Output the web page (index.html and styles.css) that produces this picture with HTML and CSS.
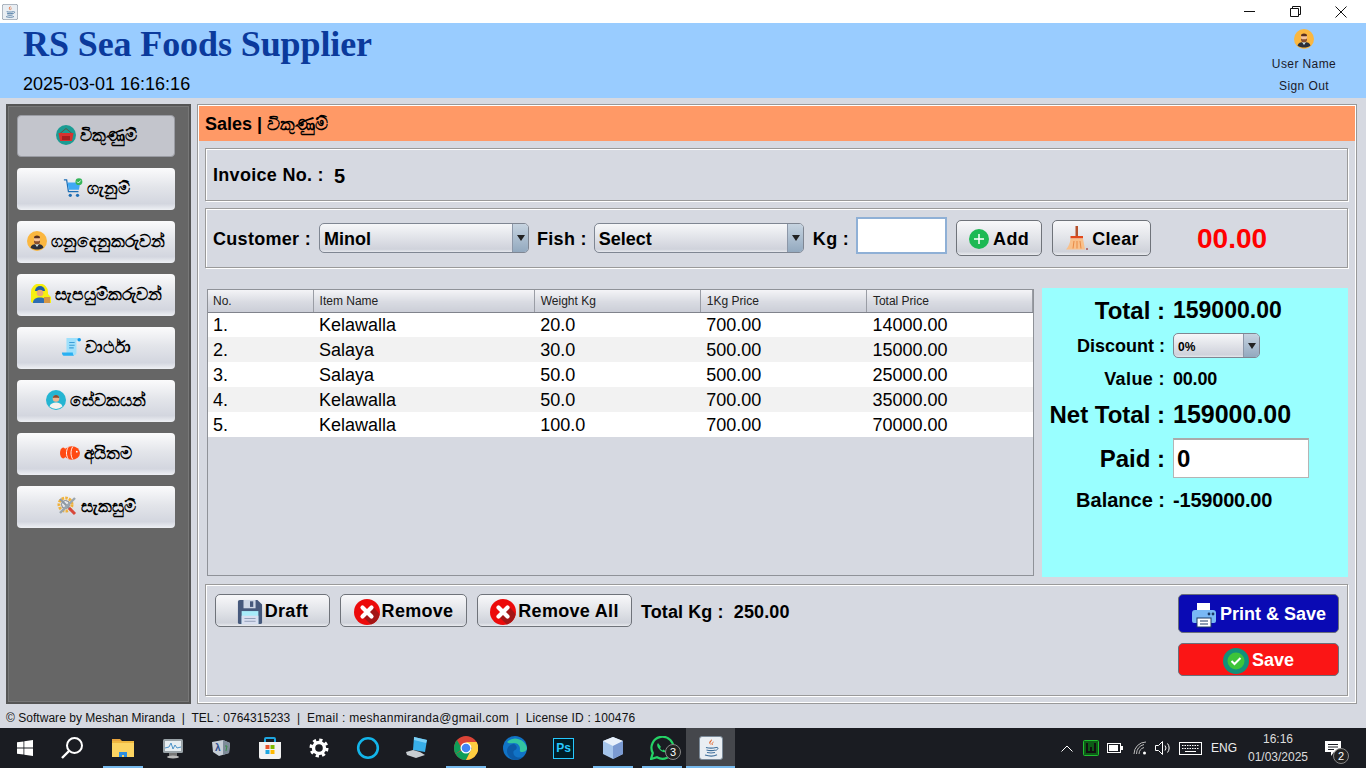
FILE: index.html
```html
<!DOCTYPE html>
<html lang="si">
<head>
  <meta charset="UTF-8" />
  <title>RS Sea Foods Supplier</title>
  <link rel="stylesheet" href="styles.css">
</head>
<body>

  <!-- shared icons -->
  <svg class="defs" width="0" height="0">
    <symbol id="i-user" viewBox="0 0 20 20">
      <circle cx="10" cy="10" r="10" fill="#fbb73f"/>
      <path d="M3.500 16.500c.5-2.500 3-3.500 6.500-3.500s6 1 6.500 3.500c-1.500 1.500-4 2-6.500 2s-5-.5-6.500-2z" fill="#2b2f3a"/>
      <path d="M8 13h4l-2 3z" fill="#cfe7ee"/>
      <rect x="7" y="5" width="6" height="8" rx="2.500" fill="#f3c29b"/>
      <path d="M7 6.800c-.3-3 6.300-3 6 0l-.4.500H7.400z" fill="#5a3020"/>
      <path d="M7 9.500l1.300.8h3.400l1.300-.8v1a3 3 0 0 1-6 0z" fill="#8a4f2c"/>
    </symbol>
    <symbol id="i-java" viewBox="0 0 24 24">
      <rect x=".5" y=".5" width="23" height="23" rx="2.500" fill="#e9eef3" stroke="#7b8a99"/>
      <path d="M12.500 3c1.500 2-2 3-1 5 .3.700 1 1.300 1 1.300-1.700-.8-2.600-2-2.200-3.200C10.800 4.800 12.500 4.500 12.500 3z" fill="#e2642a"/>
      <path d="M14.500 6c-1.500 1-2 1.600-1 3" fill="none" stroke="#e2642a"/>
      <path d="M7 11.500c3 .8 7 .8 10 0M7.500 14c2.500.7 6.500.7 9 0M8 16.500c2.500.6 5.500.6 8 0M6 19c4 1.300 9 1.300 12-.2" fill="none" stroke="#3f6f9b" stroke-width="1.200"/>
      <path d="M17 11.500c2.500-.8 3 1.800-.5 3" fill="none" stroke="#3f6f9b"/>
    </symbol>
    <symbol id="i-remove" viewBox="0 0 26 26">
      <circle cx="13" cy="13" r="13" fill="#ec0b0b"/>
      <path d="M9 18l8 7.500a13 13 0 0 0 8.500-10.500l-6-7z" fill="#a31616"/>
      <path d="M8.500 8.500l9 9M17.500 8.500l-9 9" stroke="#fff" stroke-width="4.200" stroke-linecap="round"/>
    </symbol>
  </svg>

  <div class="titlebar">
    <svg class="app-icon"><use href="#i-java"/></svg>
    <div class="win-btns">
      <span class="win-btn"><svg width="11" height="11" viewBox="0 0 11 11"><path d="M0 5.500h11" stroke="#111"/></svg></span>
      <span class="win-btn"><svg width="11" height="11" viewBox="0 0 11 11"><path d="M.5 2.500h8v8h-8zM2.500 2.500V.5h8v8H8.500" fill="none" stroke="#111"/></svg></span>
      <span class="win-btn"><svg width="12" height="12" viewBox="0 0 12 12"><path d="M.5.500l11 11M11.500.5l-11 11" stroke="#111"/></svg></span>
    </div>
  </div>

  <header class="app-header">
    <div class="brand">
      <h1>RS Sea Foods Supplier</h1>
      <div class="clock">2025-03-01 16:16:16</div>
    </div>
    <div class="user-box">
      <svg class="user-icon"><use href="#i-user"/></svg>
      <span>User Name</span>
      <span>Sign Out</span>
    </div>
  </header>

  <main class="main">
    <nav class="sidebar">
      <button class="nav-btn active">
        <svg class="nav-icon" viewBox="0 0 20 20"><circle cx="10" cy="10" r="10" fill="#1b9c93"/><path d="M4 8.500L10 3.500l6 5" fill="none" stroke="#6b4a3a" stroke-width=".9"/><path d="M2.500 8h15l-1.500 8H4z" fill="#d8322f"/><rect x="6" y="11" width="8" height="4" fill="#a81f1f"/></svg>
        විකුණුම්
      </button>
      <button class="nav-btn">
        <svg class="nav-icon" viewBox="0 0 22 22"><path d="M1 2h3l2 13h11" fill="none" stroke="#1f6fb5" stroke-width="1.400"/><path d="M5 5h14l-1.500 8H6.500z" fill="#3fa9f5"/><circle cx="8" cy="19" r="1.800" fill="#1f6fb5"/><circle cx="16" cy="19" r="1.800" fill="#1f6fb5"/><circle cx="17.500" cy="4" r="3.800" fill="#35b55a"/><path d="M15.500 4l1.500 1.500 2.500-2.800" fill="none" stroke="#fff"/></svg>
        ගැනුම්
      </button>
      <button class="nav-btn">
        <svg class="nav-icon"><use href="#i-user"/></svg>
        ගනුදෙනුකරුවන්
      </button>
      <button class="nav-btn">
        <svg class="nav-icon" viewBox="0 0 20 20"><path d="M0 8a8.500 8.500 0 0 1 17 0v2l3 3v6H2l-2-1z" fill="#f7ef10"/><path d="M4 7a5 5 0 0 1 10 0z" fill="#1d5fa8"/><circle cx="9" cy="9" r="3.300" fill="#e9a877"/><path d="M2 19c0-4 3-5.500 7-5.500s6 1.500 6 5.500z" fill="#2c6db3"/><rect x="13" y="13" width="6" height="6" fill="#d59644"/></svg>
        සැපයුම්කරුවන්
      </button>
      <button class="nav-btn">
        <svg class="nav-icon" viewBox="0 0 22 22"><path d="M6 1h13l-2 3v13a3 3 0 0 1-3 3H2c2 0 4-1 4-3z" fill="#9fe0fb"/><path d="M1 17h12c0 1.500.5 3 1.500 3.500H3c-1 0-2-1.500-2-3.500z" fill="#2ab0f2"/><path d="M9 6h6M9 9h6M9 12h5" stroke="#3d9ed8" stroke-width="1.200"/><circle cx="20" cy="3" r="2" fill="#0f9bec"/></svg>
        වාර්ථා
      </button>
      <button class="nav-btn">
        <svg class="nav-icon" viewBox="0 0 20 20"><circle cx="10" cy="10" r="10" fill="#25b5d2"/><path d="M3.500 16.500c1-3 3.500-4 6.500-4s5.500 1 6.500 4a10 10 0 0 1-13 0z" fill="#f4f1ee"/><circle cx="10" cy="8.500" r="3.300" fill="#efb48f"/><path d="M6.800 8c0-4 6.400-4 6.400 0-2 0-4-.5-6.400 0z" fill="#8a4a2f"/></svg>
        සේවකයන්
      </button>
      <button class="nav-btn">
        <svg class="nav-icon" viewBox="0 0 22 16"><ellipse cx="3.500" cy="8" rx="3.500" ry="6" fill="#ff4a12"/><ellipse cx="13" cy="8" rx="9" ry="7.500" fill="#ff4a12"/><path d="M9 1.500c-2.500 4-2.500 9 0 13M14 1c-2.500 4-2.500 10 0 14" fill="none" stroke="#fff" stroke-width="1"/><circle cx="18.500" cy="6.500" r="1" fill="#fff"/></svg>
        අයිතම
      </button>
      <button class="nav-btn">
        <svg class="nav-icon" viewBox="0 0 20 20"><circle cx="8.500" cy="8.500" r="6.500" fill="none" stroke="#f0b23c" stroke-width="3" stroke-dasharray="2.500 1.200"/><circle cx="8.500" cy="8.500" r="4" fill="none" stroke="#7b7f86"/><path d="M3 3l14 14" stroke="#8d98a3" stroke-width="2"/><path d="M12 12l6 6" stroke="#d8473a" stroke-width="3"/><path d="M18 2L3 17" stroke="#9aa5ad" stroke-width="2.400"/></svg>
        සැකසුම්
      </button>
    </nav>

    <section class="content">
      <div class="page-title">Sales | විකුණුම්</div>
      <div class="page-body">
        <div class="panel invoice-panel">
          <span class="lbl">Invoice No. :</span>
          <span class="invoice-no">5</span>
        </div>

        <div class="panel form-panel">
          <span class="lbl">Customer :</span>
          <div class="combo combo-wide"><span>Minol</span><i class="combo-arrow"></i></div>
          <span class="lbl fish-lbl">Fish :</span>
          <div class="combo combo-wide fish-combo"><span>Select</span><i class="combo-arrow"></i></div>
          <span class="lbl kg-lbl">Kg :</span>
          <input class="kg-input" type="text" />
          <button class="btn add-btn">
            <svg class="btn-icon-sm" viewBox="0 0 20 20"><circle cx="10" cy="10" r="10" fill="#1db954"/><path d="M10 5v10M5 10h10" stroke="#fff" stroke-width="1.500"/></svg>
            Add
          </button>
          <button class="btn clear-btn">
            <svg class="btn-icon" viewBox="0 0 24 26"><rect x="10.500" y="0" width="2.500" height="11" fill="#b5512c"/><rect x="5.500" y="10" width="12.500" height="2.500" fill="#e2481c"/><path d="M5.500 12.500H18l2 11H1c2.500-3 4-6 4.500-11z" fill="#f9c08a"/><path d="M9 15l-1 7.500M12 15v7.500M15 15l1 7.500" stroke="#e98a45"/><circle cx="22" cy="23" r="1" fill="#a55"/></svg>
            Clear
          </button>
          <span class="amount-red">00.00</span>
        </div>

        <div class="middle">
          <div class="table-wrap">
            <table class="items">
              <thead>
                <tr><th class="c-no">No.</th><th class="c-name">Item Name</th><th class="c-col">Weight Kg</th><th class="c-col">1Kg Price</th><th class="c-col">Total Price</th></tr>
              </thead>
              <tbody>
                <tr><td>1.</td><td>Kelawalla</td><td>20.0</td><td>700.00</td><td>14000.00</td></tr>
                <tr><td>2.</td><td>Salaya</td><td>30.0</td><td>500.00</td><td>15000.00</td></tr>
                <tr><td>3.</td><td>Salaya</td><td>50.0</td><td>500.00</td><td>25000.00</td></tr>
                <tr><td>4.</td><td>Kelawalla</td><td>50.0</td><td>700.00</td><td>35000.00</td></tr>
                <tr><td>5.</td><td>Kelawalla</td><td>100.0</td><td>700.00</td><td>70000.00</td></tr>
              </tbody>
            </table>
          </div>

          <div class="totals">
            <span class="t-lbl f24">Total :</span><span class="t-val f23">159000.00</span>
            <span class="t-lbl f18">Discount :</span><div class="combo combo-small"><span>0%</span><i class="combo-arrow"></i></div>
            <span class="t-lbl f18 wide">Value :</span><span class="t-val f18 tight">00.00</span>
            <span class="t-lbl f24">Net Total :</span><span class="t-val f25">159000.00</span>
            <span class="t-lbl f24">Paid :</span><input class="paid-input" type="text" value="0" />
            <span class="t-lbl f19">Balance :</span><span class="t-val f19 tight">-159000.00</span>
          </div>
        </div>

        <div class="panel bottom-panel">
          <div class="bottom-left">
            <button class="btn draft-btn">
              <svg class="btn-icon" viewBox="0 0 26 28"><path d="M0 3a2 2 0 0 1 2-2h19l5 5v19a2 2 0 0 1-2 2H2a2 2 0 0 1-2-2z" fill="#46597c"/><rect x="6" y="1" width="13" height="9" fill="#cfd8e6"/><rect x="13" y="2.500" width="3.500" height="6" fill="#46597c"/><rect x="4" y="13" width="18" height="14" fill="#a8ecfa"/><rect x="4" y="18" width="18" height="9" fill="#d9dff0"/><path d="M7 21h12M7 24h12" stroke="#8d9ab5"/></svg>
              Draft
            </button>
            <button class="btn remove-btn"><svg class="btn-icon"><use href="#i-remove"/></svg>Remove</button>
            <button class="btn remove-all-btn"><svg class="btn-icon"><use href="#i-remove"/></svg>Remove All</button>
            <span class="lbl total-kg">Total Kg :&nbsp; 250.00</span>
          </div>
          <div class="bottom-right">
            <button class="btn-solid print-btn">
              <svg class="btn-icon" viewBox="0 0 24 26"><rect x="5" y="1" width="13" height="8" fill="#fff"/><path d="M3 8h18a3 3 0 0 1 3 3v8a2 2 0 0 1-2 2H2a2 2 0 0 1-2-2v-8a3 3 0 0 1 3-3z" fill="#79b8f5"/><circle cx="17" cy="12" r="1.400" fill="#1c3a66"/><circle cx="21" cy="12" r="1.400" fill="#1c3a66"/><rect x="5" y="16" width="14" height="9" fill="#fff" stroke="#1c3a66"/><path d="M8 19h8M8 22h8" stroke="#1c3a66"/></svg>
              Print &amp; Save
            </button>
            <button class="btn-solid save-btn">
              <svg class="btn-icon" viewBox="0 0 26 26"><circle cx="13" cy="13" r="13" fill="#12917a"/><circle cx="13" cy="13" r="8.500" fill="#3dc43a"/><path d="M8.500 13l3 3 6-6" fill="none" stroke="#fff" stroke-width="2"/></svg>
              Save
            </button>
          </div>
        </div>
      </div>
    </section>
  </main>

  <footer class="app-footer">© Software by Meshan Miranda  |  TEL : 0764315233  |  <span class="foot-email">Email : meshanmiranda@gmail.com</span>  |  <span class="foot-lic">License ID : 100476</span></footer>

  <div class="taskbar">
    <div class="task-items">
      <span class="task">
        <svg width="16" height="16" viewBox="0 0 16 16"><path d="M0 2.300l6.500-.9v6.200H0zM7.300 1.300L16 0v7.600H7.300zM0 8.400h6.500v6.200L0 13.700zM7.300 8.400H16V16l-8.700-1.200z" fill="#fff"/></svg>
      </span>
      <span class="task search-task">
        <svg width="24" height="24" viewBox="0 0 24 24"><circle cx="14.500" cy="9.500" r="7.500" fill="none" stroke="#fff" stroke-width="2"/><path d="M9 15l-7 7" stroke="#fff" stroke-width="2.400"/></svg>
      </span>
      <span class="task open">
        <svg width="22" height="20" viewBox="0 0 22 20"><path d="M0 1h8l2 2h-10z" fill="#e8a33d"/><rect y="3" width="22" height="16" fill="#fcd462"/><rect y="3" width="22" height="2" fill="#f0b840"/><path d="M7 19v-5h8v5h-3v-2h-2v2z" fill="#2f8fe0"/></svg>
      </span>
      <span class="task">
        <svg width="24" height="24" viewBox="0 0 24 24"><rect x="3" y="3" width="20" height="14" rx="1.500" fill="#9aa3a8"/><rect x="5" y="5" width="16" height="10" fill="#e8eef2"/><path d="M5 12l4-1 2-4 2 6 2-4 2 3 4-1" fill="none" stroke="#4d93c9"/><rect x="9" y="17" width="8" height="3" fill="#777"/><ellipse cx="13" cy="21" rx="6" ry="1.500" fill="#bbb"/></svg>
      </span>
      <span class="task">
        <svg width="22" height="20" viewBox="0 0 22 20"><path d="M2 4l11-2 7 3-1 10-10 3-6-4z" fill="#c5cdd6"/><path d="M13 2l7 3-1 10-6 2z" fill="#7d8b99"/><text x="5" y="13" class="tray-glyph">λ</text><path d="M15 8l2 0-1 5" fill="none" stroke="#3a8f4a"/></svg>
      </span>
      <span class="task">
        <svg width="24" height="24" viewBox="0 0 24 24"><path d="M7 7V3a1 1 0 0 1 1-1h8a1 1 0 0 1 1 1v4" fill="none" stroke="#1fa6e0" stroke-width="2"/><path d="M1 6h22v15a2 2 0 0 1-2 2H3a2 2 0 0 1-2-2z" fill="#f2f2f2"/><rect x="7.500" y="9" width="4" height="4" fill="#e8522b"/><rect x="12.500" y="9" width="4" height="4" fill="#7fba00"/><rect x="7.500" y="14" width="4" height="4" fill="#1fa6e0"/><rect x="12.500" y="14" width="4" height="4" fill="#ffb900"/></svg>
      </span>
      <span class="task">
        <svg width="20" height="20" viewBox="0 0 20 20"><circle cx="10" cy="10" r="5.500" fill="none" stroke="#fff" stroke-width="3.400"/><circle cx="10" cy="10" r="8" fill="none" stroke="#fff" stroke-width="3" stroke-dasharray="3.200 3.080"/></svg>
      </span>
      <span class="task">
        <svg width="24" height="24" viewBox="0 0 24 24"><circle cx="12" cy="12" r="9.800" fill="none" stroke="#13b5ea" stroke-width="2.600"/></svg>
      </span>
      <span class="task">
        <svg width="24" height="24" viewBox="0 0 24 24"><path d="M9 1l13 3-2 12-12-2z" fill="#38aee8"/><path d="M9 1l13 3-1 3-12-3z" fill="#7dd0f5"/><path d="M1 16l7-2 7 2 5 3-9 3-9-3z" fill="#c9ced2"/></svg>
      </span>
      <span class="task open">
        <svg width="24" height="24" viewBox="0 0 24 24"><circle cx="12" cy="12" r="12" fill="#db4437"/><path d="M12 12L1.600 18A12 12 0 0 0 12 24l6-12z" fill="#0f9d58"/><path d="M12 6h10.600A12 12 0 0 1 12 24l6-12z" fill="#ffcd40"/><path d="M1.600 18A12 12 0 0 1 3 4l5 9z" fill="#0f9d58"/><circle cx="12" cy="12" r="5.500" fill="#fff"/><circle cx="12" cy="12" r="4.300" fill="#4285f4"/></svg>
      </span>
      <span class="task">
        <svg width="24" height="24" viewBox="0 0 24 24"><circle cx="12" cy="12" r="12" fill="#1173c6"/><path d="M4 6a12 12 0 0 1 20 6c0 3-3 4-5 4-3 0-2-2-2-3 0-3-2-6-6-6-3 0-5 1-7-1z" fill="#33c6a1"/><path d="M11 8c-4 0-7 3-7 7 0 4 3 8 8 9 3 0 6-1 8-3-3 1-7 1-9-2-1-2-1-4 1-5 2-1 3-4-1-6z" fill="#0c5aa6"/></svg>
      </span>
      <span class="task">
        <span class="ps-icon">Ps</span>
      </span>
      <span class="task open">
        <svg width="24" height="24" viewBox="0 0 24 24"><path d="M12 1l10 4v13l-10 5-10-5V5z" fill="#a5c4ea"/><path d="M12 1l10 4-10 5L2 5z" fill="#e8f0fa"/><path d="M12 10l10-5v13l-10 5z" fill="#7b9ad1"/></svg>
      </span>
      <span class="task open">
        <svg width="24" height="24" viewBox="0 0 24 24"><path d="M1 23l1.800-6A11 11 0 1 1 7 21.300z" fill="none" stroke="#25d366" stroke-width="2.200"/><path d="M8 7c-1.500 1.500-1 4 1.500 6.500S14.500 17 16 15.500l-2.500-2-1 1c-1-.5-2-1.500-2.500-2.500l1-1z" fill="#25d366"/></svg>
        <span class="task-badge">3</span>
      </span>
      <span class="task open current">
        <svg width="24" height="24"><use href="#i-java"/></svg>
      </span>
    </div>

    <div class="tray">
      <svg class="tray-caret" width="12" height="7" viewBox="0 0 12 7"><path d="M.5 6.500L6 1l5.500 5.500" fill="none" stroke="#fff"/></svg>
      <svg class="tray-ico" width="16" height="16" viewBox="0 0 16 16"><rect x=".5" y=".5" width="15" height="15" rx="1" fill="#0d5c17" stroke="#1fbf2e"/><path d="M4 3v9h8V3M8 7v5" fill="none" stroke="#111" stroke-width="2"/></svg>
      <svg class="tray-ico tray-batt" width="16" height="10" viewBox="0 0 16 10"><rect x=".5" y=".5" width="13" height="9" fill="none" stroke="#fff"/><rect x="2" y="2" width="9" height="6" fill="#fff"/><rect x="14" y="3" width="2" height="4" fill="#fff"/></svg>
      <svg class="tray-ico" width="14" height="14" viewBox="0 0 14 14"><path d="M1 13A12 12 0 0 1 13 1M3.500 13A9.500 9.500 0 0 1 11 3.500M6 13a7 7 0 0 1 5-6.500" fill="none" stroke="#bbb"/><circle cx="11.500" cy="12" r="1.500" fill="#fff"/></svg>
      <svg class="tray-ico" width="16" height="14" viewBox="0 0 16 14"><path d="M.5 4.500h3L7.500.5v13l-4-4h-3z" fill="none" stroke="#fff"/><path d="M10 4.500a4 4 0 0 1 0 5M12.500 2.500a7 7 0 0 1 0 9" fill="none" stroke="#fff"/></svg>
      <svg class="tray-ico" width="23" height="13" viewBox="0 0 23 13"><rect x=".5" y=".5" width="22" height="12" fill="none" stroke="#fff"/><path d="M3 3.500h17M3 6.500h17" stroke="#fff" stroke-dasharray="1.500 1"/><path d="M6 9.500h11" stroke="#fff"/></svg>
      <span class="tray-lang">ENG</span>
      <span class="tray-clock"><span>16:16</span><span>01/03/2025</span></span>
      <span class="tray-note">
        <svg width="16" height="15" viewBox="0 0 16 15"><path d="M0 0h16v11H9l-3 4v-4H0z" fill="#fff"/><path d="M3 3.500h10M3 6h10M3 8.500h6" stroke="#1a1c22"/></svg>
        <span class="task-badge">2</span>
      </span>
    </div>
  </div>

</body>
</html>
```

FILE: styles.css
```css
* { box-sizing: border-box; }

body {
  margin: 0;
  width: 1366px;
  height: 768px;
  overflow: hidden;
  display: flex;
  flex-direction: column;
  background: #d6d9e1;
  color: #000;
  font-family: "Liberation Sans", Arial, sans-serif;
}

.defs { position: absolute; }

/* window chrome */
.titlebar {
  height: 23px;
  background: #fff;
  display: flex;
  align-items: center;
  justify-content: space-between;
  flex: none;
}
.app-icon { width: 16px; height: 16px; margin-left: 2px; }
.win-btns { display: flex; padding-right: 2px; }
.win-btn {
  width: 46px;
  height: 23px;
  display: flex;
  align-items: center;
  justify-content: center;
}

.app-header {
  height: 75px;
  flex: none;
  background: #99ccff;
  display: flex;
  justify-content: space-between;
  padding-left: 23px;
}
.app-header h1 {
  margin: 0;
  padding-top: 1px;
  font: bold 36px/41px "Liberation Serif", "Times New Roman", serif;
  letter-spacing: -.1px;
  color: #0b3a9c;
}
.clock { font-size: 18px; line-height: 21px; margin-top: 9px; }
.user-box {
  width: 84px;
  margin-right: 20px;
  padding-top: 6px;
  display: flex;
  flex-direction: column;
  align-items: center;
  font-size: 12px;
  letter-spacing: .4px;
  color: #1a1a2a;
}
.user-icon { width: 20px; height: 20px; flex: none; margin-bottom: 8px; }
.user-box span { line-height: 14px; margin-bottom: 8px; flex: none; }

/* main layout */
.main {
  flex: none;
  height: 606px;
  display: flex;
  gap: 6px;
  padding: 6px 9px 0 6px;
}

.sidebar {
  width: 185px;
  flex: none;
  background: #666;
  border: 2px solid #555;
  box-shadow: inset 0 0 0 1px #777;
  padding: 9px 14px 0 9px;
  display: flex;
  flex-direction: column;
  gap: 11px;
}
.nav-btn {
  height: 42px;
  flex: none;
  display: flex;
  align-items: center;
  justify-content: center;
  gap: 4px;
  border: 0;
  border-radius: 4px;
  padding: 0 0 2px;
  font: bold 16.5px "Liberation Sans", "Noto Sans", sans-serif;
  color: #000;
  background: linear-gradient(#fbfbfc 0, #e3e5ea 45%, #d3d6df 85%, #eef0f4 100%);
}
.nav-btn.active {
  background: #c3c5cc;
  border: 1px solid #9a9ca3;
}
.nav-icon { width: 20px; height: 20px; flex: none; }

.content {
  flex: 1;
  min-width: 0;
  border: 1px solid #999;
  box-shadow: inset 1px 1px 0 #fff, inset -1px -1px 0 #fff;
  padding: 1px;
  display: flex;
  flex-direction: column;
}
.page-title {
  height: 35px;
  flex: none;
  background: #ff9966;
  padding: 1px 0 0 6px;
  font: bold 18px/35px "Liberation Sans", "Noto Sans", sans-serif;
}
.page-body {
  flex: 1;
  padding: 7px 7px 6px 6px;
  display: flex;
  flex-direction: column;
}

.panel {
  border: 1px solid #9a9a9a;
  box-shadow: inset 1px 1px 0 #fff, 1px 1px 0 #fff;
}
.lbl {
  padding-top: 2px;
  font-size: 18px;
  font-weight: bold;
  letter-spacing: .3px;
  white-space: nowrap;
}

.invoice-panel {
  height: 53px;
  flex: none;
  display: flex;
  align-items: center;
  padding-left: 7px;
}
.invoice-no { font-size: 20px; font-weight: bold; margin-left: 10px; margin-top: 3px; }

.form-panel {
  height: 60px;
  flex: none;
  margin-top: 7px;
  display: flex;
  align-items: center;
  padding-left: 7px;
}

/* nimbus look-alike controls */
.combo {
  display: flex;
  align-items: center;
  justify-content: space-between;
  border: 1px solid #7f8692;
  border-radius: 5px;
  overflow: hidden;
  font-weight: bold;
  background: linear-gradient(#f6f7f9 0, #dcdee5 60%, #cfd2db 90%, #e6e8ed 100%);
}
.combo span { padding: 2px 0 0 4px; }
.combo-wide { width: 210px; height: 30px; font-size: 18px; margin-left: 8px; }
.fish-combo { margin-left: 7px; }
.combo-small { width: 87px; height: 25px; font-size: 12px; justify-self: start; }
.combo-arrow {
  width: 16px;
  height: 100%;
  flex: none;
  position: relative;
  border-left: 1px solid #8c97a8;
  background: linear-gradient(#c6d3e0, #93a9bf);
}
.combo-arrow::after {
  content: "";
  position: absolute;
  left: 4px;
  top: 50%;
  margin-top: -3px;
  border: 4px solid transparent;
  border-top: 6px solid #222;
  border-bottom: 0;
}
.fish-lbl { margin-left: 8px; }
.kg-lbl { margin-left: 9px; }
.kg-input {
  width: 91px;
  height: 37px;
  margin-left: 7px;
  align-self: flex-start;
  margin-top: 8px;
  background: #fff;
  border: 2px solid #8fb0d6;
  outline: 0;
}

.btn {
  height: 36px;
  display: flex;
  align-items: center;
  justify-content: center;
  gap: 2px;
  border: 1px solid #6f737a;
  border-radius: 5px;
  padding: 2px 0 0;
  color: #000;
  font: bold 18px "Liberation Sans", sans-serif;
  letter-spacing: .3px;
  background: linear-gradient(#f8f8fa 0, #e2e4e9 50%, #cfd2da 90%, #e9ebef 100%);
}
.btn-icon { width: 26px; height: 26px; flex: none; }
.btn-icon-sm { width: 20px; height: 20px; flex: none; }
.add-btn { width: 86px; margin-left: 9px; gap: 4px; }
.clear-btn { width: 99px; margin-left: 10px; }
.amount-red {
  margin-left: 46px;
  padding-top: 2px;
  color: #ff0000;
  font-size: 28px;
  font-weight: bold;
}

.middle {
  flex: none;
  height: 289px;
  margin-top: 20px;
  display: flex;
  padding-left: 2px;
  gap: 8px;
}
.table-wrap {
  width: 827px;
  margin-top: 1px;
  height: 287px;
  border: 1px solid #8f9298;
}
.items {
  width: 825px;
  border-collapse: collapse;
  table-layout: fixed;
}
.items th {
  height: 22px;
  padding: 0 0 0 6px;
  font-size: 12px;
  font-weight: normal;
  text-align: left;
  color: #222;
  border-right: 1px solid #9a9da5;
  border-bottom: 1px solid #80838c;
  background: linear-gradient(#f4f4f7, #d9dbe2 55%, #cbced7);
}
.c-no { width: 105px; }
.c-name { width: 221px; }
.c-col { width: 166px; }
.items td {
  height: 25px;
  padding: 2px 0 0 6px;
  font-size: 18px;
  background: #fff;
}
.items th:first-child,
.items td:first-child { padding-left: 5px; }
.items tbody tr:nth-child(even) td { background: #f2f2f2; }

.totals {
  width: 307px;
  background: #99ffff;
  display: grid;
  grid-template-columns: 123px auto;
  grid-template-rows: 44px 27px 40px 30px 58px 26px;
  column-gap: 8px;
  align-items: center;
  align-content: start;
}
.t-lbl {
  padding-top: 1px;
  text-align: right;
  font-weight: bold;
  white-space: nowrap;
  justify-self: end;
  margin-left: -20px;
}
.t-val { font-weight: bold; white-space: nowrap; }
.wide { letter-spacing: .4px; }
.tight { letter-spacing: -.2px; }
.f18 { font-size: 18px; }
.f19 { font-size: 20px; }
.f23 { font-size: 23px; }
.f24 { font-size: 24px; }
.f25 { font-size: 25px; }
.paid-input {
  width: 136px;
  height: 40px;
  border: 1px solid #b5b5b5;
  border-top: 2px solid #aaa;
  background: #fff;
  padding: 0 0 0 3px;
  font: bold 24px "Liberation Sans", sans-serif;
  outline: 0;
}

.bottom-panel {
  flex: none;
  height: 112px;
  margin-top: 7px;
  display: flex;
  justify-content: space-between;
  padding: 9px 8px 0 9px;
}
.bottom-left { display: flex; align-items: flex-start; gap: 10px; }
.bottom-left .btn { height: 33px; }
.draft-btn { width: 115px; }
.remove-btn { width: 127px; }
.remove-all-btn { width: 155px; }
.total-kg { line-height: 33px; margin-left: -1px; letter-spacing: .1px; }
.bottom-right { display: flex; flex-direction: column; gap: 10px; }
.btn-solid {
  width: 161px;
  display: flex;
  align-items: center;
  justify-content: center;
  gap: 3px;
  border: 1px solid #6a6f7a;
  border-radius: 5px;
  padding: 2px 0 0;
  color: #fff;
  font: bold 18px "Liberation Sans", sans-serif;
}
.print-btn { height: 39px; background: #0a0ab4; }
.save-btn { height: 33px; background: #fb1515; }

.app-footer {
  height: 24px;
  flex: none;
  padding: 7px 0 0 6px;
  font-size: 12px;
  line-height: 14px;
  letter-spacing: .03px;
  white-space: pre;
  color: #111;
}
.foot-email { letter-spacing: .3px; }
.foot-lic { letter-spacing: .15px; }

/* taskbar */
.taskbar {
  height: 40px;
  flex: none;
  background: #1a1c22;
  display: flex;
  justify-content: space-between;
  color: #fff;
}
.task-items { display: flex; }
.task {
  width: 49px;
  height: 40px;
  display: flex;
  align-items: center;
  justify-content: center;
  position: relative;
}
.search-task { padding-right: 3px; }
.task.open::after {
  content: "";
  position: absolute;
  left: 5px;
  right: 4px;
  bottom: 0;
  height: 2px;
  background: #76b9ed;
}
.task.current { background: #45474c; }
.task.current::after { left: 0; right: 0; }
.ps-icon {
  width: 21px;
  height: 21px;
  border: 1px solid #26c9ff;
  background: #001d26;
  color: #26c9ff;
  font-size: 12px;
  font-weight: bold;
  line-height: 19px;
  text-align: center;
}
.task-badge {
  position: absolute;
  left: 28px;
  top: 16px;
  width: 16px;
  height: 16px;
  border: 1px solid #888;
  border-radius: 50%;
  background: #222;
  color: #fff;
  font-size: 11px;
  line-height: 14px;
  text-align: center;
}
.tray-glyph { font-size: 10px; font-weight: bold; fill: #2b4b8c; }

.tray {
  display: flex;
  align-items: center;
  padding-right: 25px;
}
.tray-caret { margin-right: 10px; }
.tray-ico { flex: none; margin-right: 8px; }
.tray-batt { margin-right: 10px; }
.tray-lang { font-size: 12px; margin-left: -2px; width: 32px; text-align: center; color: #eee; }
.tray-clock {
  width: 72px;
  margin-left: 2px;
  display: flex;
  flex-direction: column;
  align-items: center;
  gap: 4px;
  font-size: 12px;
  line-height: 14px;
  color: #ddd;
}
.tray-note {
  width: 16px;
  margin-left: 11px;
  position: relative;
  display: flex;
}
.tray-note .task-badge { left: 8px; top: 7px; }
```
